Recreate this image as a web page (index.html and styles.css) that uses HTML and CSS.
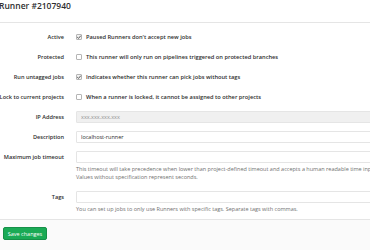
FILE: index.html
```html
<!DOCTYPE html>
<html lang="en">
<head>
    <meta charset="UTF-8">
    <meta name="viewport" content="width=device-width, initial-scale=1.0">
    <title>Runner #2107940</title>
    <link rel="stylesheet" href="styles.css">
</head>
<body>
    <div class="page">
        <h3 class="title">Runner #2107940</h3>

        <form class="runner-form">
            <div class="row">
                <label class="label">Active</label>
                <div class="field check-field">
                    <span class="check checked"><svg viewBox="0 0 10 10"><path d="M2 5.2 L4.2 7.3 L8 2.8" /></svg></span>
                    Paused Runners don't accept new jobs
                </div>
            </div>
            <div class="row">
                <label class="label">Protected</label>
                <div class="field check-field">
                    <span class="check"></span>
                    This runner will only run on pipelines triggered on protected branches
                </div>
            </div>
            <div class="row">
                <label class="label">Run untagged jobs</label>
                <div class="field check-field">
                    <span class="check checked"><svg viewBox="0 0 10 10"><path d="M2 5.2 L4.2 7.3 L8 2.8" /></svg></span>
                    Indicates whether this runner can pick jobs without tags
                </div>
            </div>
            <div class="row">
                <label class="label">Lock to current projects</label>
                <div class="field check-field">
                    <span class="check"></span>
                    When a runner is locked, it cannot be assigned to other projects
                </div>
            </div>
            <div class="row">
                <label class="label">IP Address</label>
                <div class="field">
                    <input type="text" class="input" value="xxx.xxx.xxx.xxx" disabled>
                </div>
            </div>
            <div class="row">
                <label class="label">Description</label>
                <div class="field">
                    <input type="text" class="input" value="localhost-runner">
                </div>
            </div>
            <div class="row">
                <label class="label">Maximum job timeout</label>
                <div class="field">
                    <input type="text" class="input">
                    <p class="help">This timeout will take precedence when lower than project-defined timeout and accepts a human readable time input language like "1 hour".<br>Values without specification represent seconds.</p>
                </div>
            </div>
            <div class="row">
                <label class="label">Tags</label>
                <div class="field">
                    <input type="text" class="input">
                    <p class="help">You can set up jobs to only use Runners with specific tags. Separate tags with commas.</p>
                </div>
            </div>
        </form>

        <div class="actions">
            <button class="btn-save">Save changes</button>
        </div>
    </div>
</body>
</html>
```

FILE: styles.css
```css
body {
    margin: 0;
    font-family: 'Open Sans', sans-serif;
    color: #2e2e2e;
    background-color: #fff;
    overflow: hidden;
}

.page {
    width: 440px;
    height: 250px;
    margin-left: -3px;
    overflow: hidden;
}

.title {
    margin: 0;
    padding: 0 0 10px 2px;
    line-height: 12px;
    font-size: 8.5px;
    font-weight: 600;
    border-bottom: 1px solid #e5e5e5;
}

.runner-form {
    padding-top: 4px;
}

.row {
    display: flex;
    align-items: flex-start;
}

.label {
    width: 79px;
    flex-shrink: 0;
    box-sizing: border-box;
    padding-right: 12px;
    text-align: right;
    line-height: 20px;
    font-size: 5.6px;
    font-weight: 600;
    white-space: nowrap;
}

.field {
    flex: 1;
    padding-top: 4px;
}

.check-field {
    padding-top: 0;
    line-height: 20px;
    font-size: 5.7px;
    font-weight: 600;
    white-space: nowrap;
    display: flex;
    align-items: center;
}

.check {
    width: 4px;
    height: 4px;
    margin-right: 4px;
    border: 0.5px solid #b5b5b5;
    border-radius: 1px;
    background-color: #fff;
    position: relative;
}

.check.checked {
    background-color: #f2f2f2;
}

.check svg {
    position: absolute;
    left: -1px;
    top: -1px;
    width: 6px;
    height: 6px;
}

.check svg path {
    fill: none;
    stroke: #555;
    stroke-width: 1.6;
}

.input {
    display: block;
    width: 100%;
    height: 12px;
    box-sizing: border-box;
    margin: 0;
    padding: 0 4px;
    font-family: 'Open Sans', sans-serif;
    font-size: 5.5px;
    color: #2e2e2e;
    background-color: #fff;
    border: 1px solid #e5e5e5;
    border-radius: 1px;
    outline: none;
}

.input:disabled {
    background-color: #f0f0f0;
    color: #8f8f8f;
}

.help {
    margin: 2px 0 6px;
    line-height: 8px;
    font-size: 5.5px;
    color: #707070;
    white-space: nowrap;
}

.actions {
    display: flex;
    padding: 7px 6px 20px;
    background-color: #fafafa;
    border-top: 1px solid #e5e5e5;
}

.btn-save {
    width: 44px;
    height: 13px;
    padding: 0;
    font-family: 'Open Sans', sans-serif;
    font-size: 5.5px;
    color: #fff;
    background-color: #1aaa55;
    border: 1px solid #168f48;
    border-radius: 2px;
}
```
